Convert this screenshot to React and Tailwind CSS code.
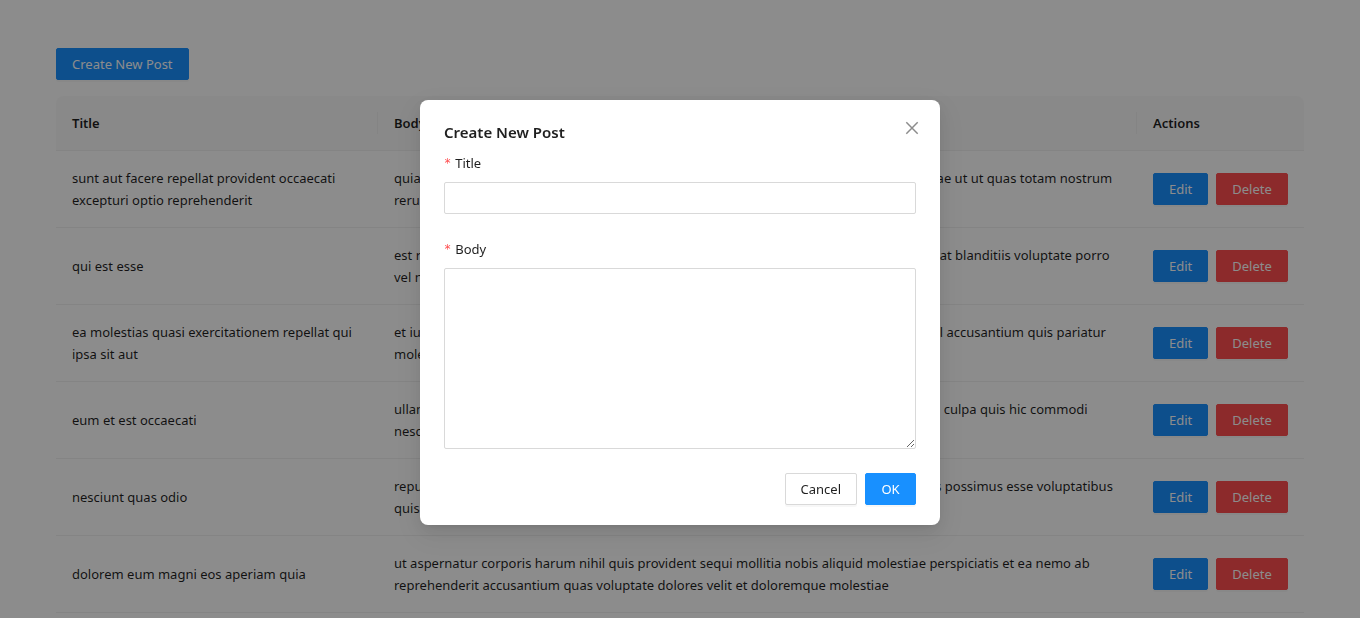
import { useState } from "react";

const posts = [
  {
    title: "sunt aut facere repellat provident occaecati\nexcepturi optio reprehenderit",
    body: "quia et suscipit suscipit recusandae consequuntur expedita et cum reprehenderit molestiae ut ut quas totam nostrum\nrerum est autem sunt rem eveniet architecto",
  },
  {
    title: "qui est esse",
    body: "est rerum tempore vitae sequi sint nihil reprehenderit dolor beatae ea dolores neque fugiat blanditiis voluptate porro\nvel nihil molestiae ut reiciendis qui aperiam non debitis possimus qui neque nisi nulla",
  },
  {
    title: "ea molestias quasi exercitationem repellat qui\nipsa sit aut",
    body: "et iusto sed quo iure voluptatem occaecati omnis eligendi aut ad voluptatem doloribus vel accusantium quis pariatur\nmolestiae porro eius odio et labore et velit aut",
  },
  {
    title: "eum et est occaecati",
    body: "ullam et saepe reiciendis voluptatem adipisci sit amet autem assumenda provident rerum culpa quis hic commodi\nnesciunt rem tenetur doloremque ipsam iure quis sunt voluptatem rerum illo velit",
  },
  {
    title: "nesciunt quas odio",
    body: "repudiandae veniam quaerat sunt sed alias aut fugiat sit autem sed est voluptatem omnis possimus esse voluptatibus\nquis est aut tenetur dolor neque",
  },
  {
    title: "dolorem eum magni eos aperiam quia",
    body: "ut aspernatur corporis harum nihil quis provident sequi mollitia nobis aliquid molestiae perspiciatis et ea nemo ab\nreprehenderit accusantium quas voluptate dolores velit et doloremque molestiae",
  },
];

const tones = {
  primary: "border-[#1890ff] bg-[#1890ff] text-white",
  danger: "border-[#ff4d4f] bg-[#ff4d4f] text-white",
  plain: "border-[#d9d9d9] bg-white text-black/88",
};

function Button({ tone = "primary", className = "", ...props }) {
  return (
    <button
      type="button"
      className={`h-8 min-w-[51px] cursor-pointer rounded-xs border px-[15px] leading-[22px] whitespace-nowrap shadow-[0_2px_0_rgba(0,0,0,0.03)] ${tones[tone]} ${className}`}
      {...props}
    />
  );
}

function HeaderCell({ children, divided = false, className = "" }) {
  return (
    <th scope="col" className={`border-b border-[#f0f0f0] bg-[#fafafa] py-4 text-left font-semibold ${className}`}>
      <div className={`px-4 ${divided ? "border-r border-[#f0f0f0]" : ""}`}>{children}</div>
    </th>
  );
}

function Field({ id, label, children }) {
  return (
    <div className="flex flex-col gap-2">
      <label htmlFor={id} className="flex gap-1">
        <span className="font-['DejaVu_Sans_Mono',monospace] text-xs leading-[22px] text-[#ff4d4f]">*</span>
        {label}
      </label>
      {children}
    </div>
  );
}

function PostDialog({ onClose }) {
  return (
    <div className="fixed inset-0 flex items-start justify-center bg-black/45 px-4 pt-[100px]">
      <form
        role="dialog"
        aria-modal="true"
        aria-labelledby="dialog-title"
        onSubmit={(e) => e.preventDefault()}
        className="w-full max-w-[520px] rounded-lg bg-white px-6 py-5 shadow-[0_6px_16px_0_rgba(0,0,0,0.08),0_3px_6px_-4px_rgba(0,0,0,0.12),0_9px_28px_8px_rgba(0,0,0,0.05)]"
      >
        <div className="mb-2 flex items-start justify-between">
          <h2 id="dialog-title" className="text-[15px] leading-6 font-semibold">
            Create New Post
          </h2>
          <button
            type="button"
            aria-label="Close"
            onClick={onClose}
            className="-mt-1 -mr-2 cursor-pointer text-black/45"
          >
            <svg viewBox="0 0 16 16" className="m-1 size-4" fill="none" stroke="currentColor" strokeWidth="1.5">
              <path d="M2.3 2.3 13.7 13.7M13.7 2.3 2.3 13.7" />
            </svg>
          </button>
        </div>
        <div className="flex flex-col gap-6">
          <Field id="post-title" label="Title">
            <input id="post-title" type="text" className="h-8 rounded-xs border border-[#d9d9d9] px-[11px] outline-none" />
          </Field>
          <Field id="post-body" label="Body">
            <textarea
              id="post-body"
              className="h-[181px] resize-y rounded-xs border border-[#d9d9d9] px-[11px] py-1 outline-none"
            />
          </Field>
          <div className="flex justify-end gap-2">
            <Button tone="plain" onClick={onClose}>Cancel</Button>
            <Button type="submit">OK</Button>
          </div>
        </div>
      </form>
    </div>
  );
}

export default function App() {
  const [open, setOpen] = useState(true);
  return (
    <div className="h-screen overflow-hidden bg-white px-14 pt-12 font-['Segoe_UI','Noto_Sans',sans-serif] text-[13px] leading-[22px] text-black/88">
      <Button className="mb-4 block" onClick={() => setOpen(true)}>Create New Post</Button>
      <table className="w-full table-fixed border-separate border-spacing-0">
        <thead>
          <tr>
            <HeaderCell divided className="w-[322px] rounded-tl-lg">Title</HeaderCell>
            <HeaderCell divided>Body</HeaderCell>
            <HeaderCell className="w-[167px] rounded-tr-lg">Actions</HeaderCell>
          </tr>
        </thead>
        <tbody>
          {posts.map((post) => (
            <tr key={post.title}>
              <td className="border-b border-[#f0f0f0] p-4 whitespace-pre-line">{post.title}</td>
              <td className="border-b border-[#f0f0f0] p-4 whitespace-pre-line">{post.body}</td>
              <td className="border-b border-[#f0f0f0] p-4">
                <div className="flex gap-2">
                  <Button>Edit</Button>
                  <Button tone="danger">Delete</Button>
                </div>
              </td>
            </tr>
          ))}
        </tbody>
      </table>
      {open && <PostDialog onClose={() => setOpen(false)} />}
    </div>
  );
}
